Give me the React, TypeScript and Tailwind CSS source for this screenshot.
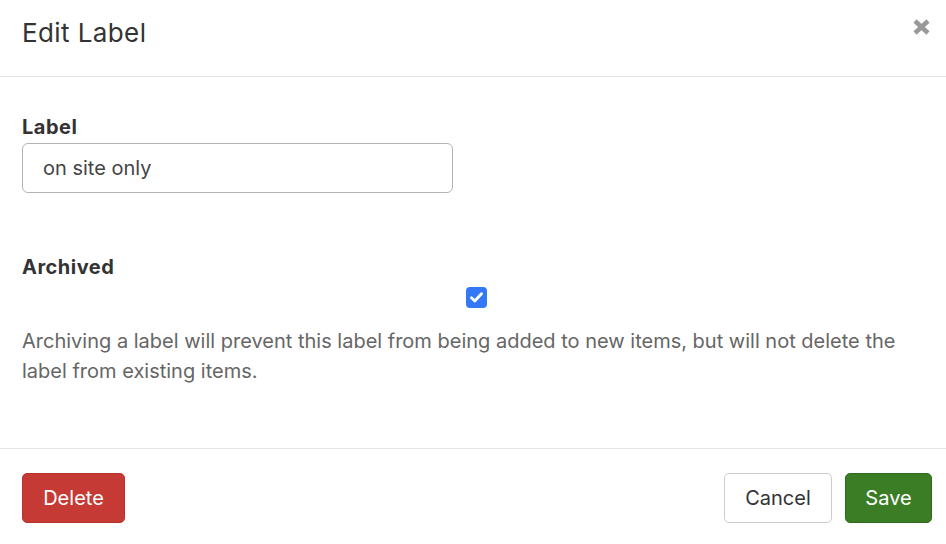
import { useState } from "react"

// Edit Label modal — header, form body, footer actions

const FONT = "font-['Inter','Liberation_Sans',Arial,sans-serif]"

function CloseIcon() {
  return (
    <svg width="19" height="18" viewBox="0 0 19 18" aria-hidden="true">
      <path d="M3 3 L16 15 M16 3 L3 15" stroke="#999" strokeWidth="4.5" strokeLinecap="butt" />
    </svg>
  )
}

function CheckBox({ checked, onChange }: { checked: boolean; onChange: () => void }) {
  return (
    <button
      type="button"
      onClick={onChange}
      aria-pressed={checked}
      className={`flex h-[21px] w-[21px] items-center justify-center rounded-[4px] ${
        checked ? "bg-[#3478f6]" : "border border-[#888] bg-white"
      }`}
    >
      {checked && (
        <svg width="13" height="11" viewBox="0 0 13 11" aria-hidden="true">
          <path d="M1.5 5.8 L4.8 9 L11.5 1.8" fill="none" stroke="white" strokeWidth="2.8" strokeLinecap="round" strokeLinejoin="round" />
        </svg>
      )}
    </button>
  )
}

export default function App() {
  const [label, setLabel] = useState("on site only")
  const [archived, setArchived] = useState(true)

  return (
    <div className={`flex h-[544px] w-full flex-col bg-white ${FONT}`}>
      {/* ── Header ── */}
      <div className="flex h-[77px] items-start justify-between border-b border-[#e5e5e5] pl-[22px] pr-[15px]">
        <h4 className="pt-[17px] text-[26px] leading-[32px] tracking-[0.4px] text-[#333]">Edit Label</h4>
        <button type="button" className="mt-[18px]" aria-label="Close">
          <CloseIcon />
        </button>
      </div>

      {/* ── Body ── */}
      <div className="flex-1 px-[22px] pt-[35px]">
        <label className="block text-[20px] font-bold leading-[30px] tracking-[0.5px] text-[#333]">Label</label>
        <input
          value={label}
          onChange={(e) => setLabel(e.target.value)}
          className="mt-px h-[50px] w-[431px] rounded-[6px] border border-[#b3b3b3] px-[20px] text-[20px] text-[#444] outline-none"
        />

        <div className="mt-[59px] text-[20px] font-bold leading-[30px] tracking-[0.5px] text-[#333]">Archived</div>
        <div className="mt-[5px] flex justify-center pl-[6px]">
          <CheckBox checked={archived} onChange={() => setArchived((v) => !v)} />
        </div>
        <p className="mt-[18px] text-[20px] leading-[30px] text-[#666]">
          Archiving a label will prevent this label from being added to new items, but will not delete the
          label from existing items.
        </p>
      </div>

      {/* ── Footer ── */}
      <div className="flex h-[96px] items-start justify-between border-t border-[#e5e5e5] pl-[22px] pr-[14px] pt-[24px]">
        <button
          type="button"
          className="h-[50px] w-[103px] rounded-[5px] border border-[#b8322e] bg-[#c63a35] text-[20px] text-white"
        >
          Delete
        </button>
        <div className="flex gap-[13px]">
          <button
            type="button"
            className="h-[50px] w-[108px] rounded-[5px] border border-[#ccc] bg-white text-[20px] text-[#333]"
          >
            Cancel
          </button>
          <button
            type="button"
            className="h-[50px] w-[87px] rounded-[5px] border border-[#2f6b1d] bg-[#3a7d24] text-[20px] text-white"
          >
            Save
          </button>
        </div>
      </div>
    </div>
  )
}
